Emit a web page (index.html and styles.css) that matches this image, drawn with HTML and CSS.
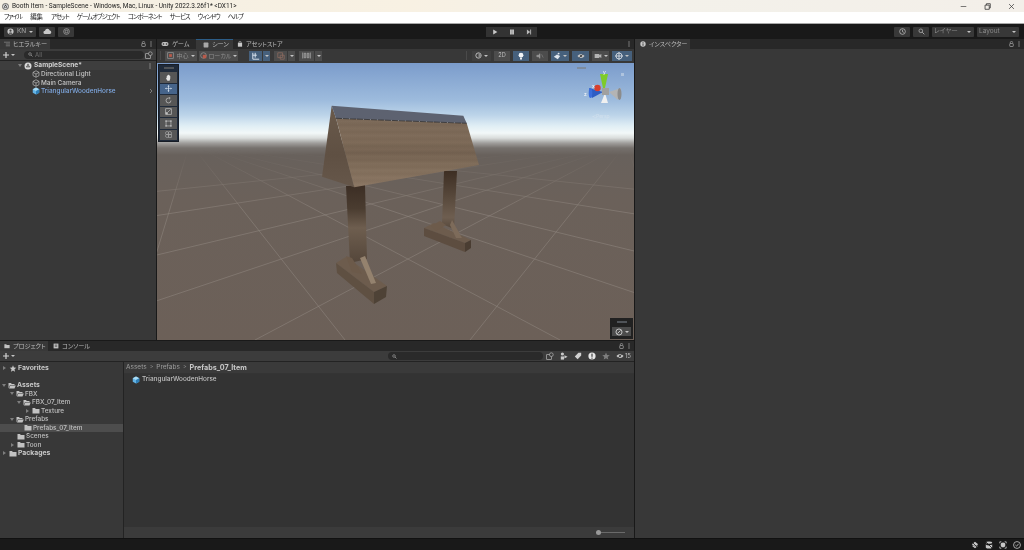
FILE: index.html
```html
<!DOCTYPE html>
<html lang="ja">
<head>
<meta charset="utf-8">
<title>Unity Editor</title>
<link rel="stylesheet" href="styles.css">
</head>
<body>
<svg class="defs" width="0" height="0" aria-hidden="true">
  <defs>
    <symbol id="i-cube" viewBox="0 0 16 16"><path d="M8 1 14.5 4.5V11.5L8 15 1.5 11.5V4.5Z" fill="#63b4e6"/><path d="M8 1 14.5 4.5 8 8 1.5 4.5Z" fill="#a9dcf5"/><path d="M8 8 14.5 4.5V11.5L8 15Z" fill="#2f7fb8"/></symbol>
    <symbol id="i-go" viewBox="0 0 16 16"><path d="M8 1.5 14 4.7V11.3L8 14.5 2 11.3V4.7ZM2 4.7 8 8 14 4.7M8 8V14.5" fill="none" stroke="#c4c4c4" stroke-width="1.3"/></symbol>
    <symbol id="i-unity" viewBox="0 0 16 16"><circle cx="8" cy="8" r="7" fill="#d8d8d8"/><path d="M8 3 12 10.5H4Z" fill="#2b2b2b"/><circle cx="8" cy="8" r="1.6" fill="#d8d8d8"/></symbol>
    <symbol id="i-fclosed" viewBox="0 0 16 14"><path d="M1 2H6L7.5 4H15V13H1Z" fill="#c2c2c2"/></symbol>
    <symbol id="i-fopen" viewBox="0 0 16 14"><path d="M1 2H6L7.5 4H13V6H4L1 13Z" fill="#c2c2c2"/><path d="M4.5 7H15.5L13 13H2Z" fill="#c2c2c2"/></symbol>
    <symbol id="i-lock" viewBox="0 0 10 12"><path d="M2.5 5V3.4a2.5 2.5 0 0 1 5 0" fill="none" stroke="#bdbdbd" stroke-width="1.2"/><rect x="1.5" y="5" width="7" height="6" rx="1" fill="none" stroke="#bdbdbd" stroke-width="1.2"/></symbol>
    <symbol id="i-dots" viewBox="0 0 4 12"><g fill="#c4c4c4"><rect x="1" y="1" width="2" height="2"/><rect x="1" y="5" width="2" height="2"/><rect x="1" y="9" width="2" height="2"/></g></symbol>
    <symbol id="i-plus" viewBox="0 0 10 10"><path d="M5 0V10M0 5H10" stroke="#d4d4d4" stroke-width="2"/></symbol>
    <symbol id="i-search" viewBox="0 0 10 10"><circle cx="4" cy="4" r="2.6" fill="none" stroke="#a8a8a8" stroke-width="1.2"/><path d="M6 6 9 9" stroke="#a8a8a8" stroke-width="1.4"/></symbol>
    <symbol id="i-eye" viewBox="0 0 16 10"><path d="M1 5C4 0 12 0 15 5 12 10 4 10 1 5Z" fill="#c4c4c4"/><circle cx="8" cy="5" r="2" fill="#3a3a3a"/><path d="M3 9.5 13 .5" stroke="#3a3a3a" stroke-width="1.2"/></symbol>
    <symbol id="i-filter" viewBox="0 0 12 12"><rect x="1" y="4" width="7" height="7" fill="none" stroke="#bdbdbd" stroke-width="1"/><circle cx="8" cy="4" r="2.8" fill="#3a3a3a" stroke="#bdbdbd" stroke-width="1"/></symbol>
  </defs>
</svg>

<div class="app">
<header class="titlebar">
  <svg class="title-logo" viewBox="0 0 16 16"><use href="#i-unity"/><circle cx="8" cy="8" r="7" fill="none" stroke="#333" stroke-width="1.5"/></svg>
  <span class="title-text">Booth Item - SampleScene - Windows, Mac, Linux - Unity 2022.3.26f1* &lt;DX11&gt;</span>
  <div class="win-controls">
    <svg viewBox="0 0 10 10"><path d="M1 5H9" stroke="#444" stroke-width="1"/></svg>
    <svg viewBox="0 0 10 10"><path d="M1.5 3H7.5V9H1.5ZM3.5 3V1H9V7H7.5" fill="none" stroke="#333" stroke-width="1.1"/></svg>
    <svg viewBox="0 0 10 10"><path d="M1.5 1.5 8.5 8.5M8.5 1.5 1.5 8.5" stroke="#333" stroke-width="1"/></svg>
  </div>
</header>

<nav class="menubar">
  <span>ファイル</span><span class="kanji">編集</span><span>アセット</span><span>ゲームオブジェクト</span><span>コンポーネント</span><span>サービス</span><span>ウィンドウ</span><span>ヘルプ</span>
</nav>

<div class="toolbar">
  <div class="tb-left">
    <div class="tb-btn tb-account"><svg class="ic7" viewBox="0 0 16 16"><circle cx="8" cy="8" r="7" fill="#c8c8c8"/><circle cx="8" cy="6" r="2.5" fill="#444"/><path d="M3.5 13c1-4 8-4 9 0" fill="#444"/></svg><span>KN</span><i class="caret"></i></div>
    <div class="tb-btn tb-icon"><svg class="ic9" viewBox="0 0 16 10"><path d="M4 9.5a3 3 0 0 1-.5-6A4.5 4.5 0 0 1 12 3a3.3 3.3 0 0 1 0 6.5Z" fill="#c8c8c8"/></svg></div>
    <div class="tb-btn tb-icon"><svg class="ic7" viewBox="0 0 16 16"><circle cx="8" cy="8" r="6.5" fill="none" stroke="#b4b4b4" stroke-width="1.5"/><circle cx="8" cy="8" r="3" fill="none" stroke="#b4b4b4" stroke-width="1.5"/></svg></div>
  </div>
  <div class="tb-center">
    <div class="play-btn"><svg viewBox="0 0 10 10"><path d="M2 1 9 5 2 9Z" fill="#c8c8c8"/></svg></div>
    <div class="play-btn"><svg viewBox="0 0 10 10"><path d="M2 1H4.5V9H2ZM5.5 1H8V9H5.5Z" fill="#e0e0e0"/></svg></div>
    <div class="play-btn"><svg viewBox="0 0 10 10"><path d="M1.5 1 7 5 1.5 9ZM7 1H8.5V9H7Z" fill="#b8b8b8"/></svg></div>
  </div>
  <div class="tb-right">
    <div class="tb-btn tb-icon"><svg class="ic7" viewBox="0 0 16 16"><circle cx="8" cy="8" r="6.5" fill="none" stroke="#c8c8c8" stroke-width="1.6"/><path d="M8 4V8.5L11 10" fill="none" stroke="#c8c8c8" stroke-width="1.6"/></svg></div>
    <div class="tb-btn tb-icon"><svg class="ic7" viewBox="0 0 10 10"><use href="#i-search"/></svg></div>
    <div class="tb-btn tb-drop"><span>レイヤー</span><i class="caret"></i></div>
    <div class="tb-btn tb-drop"><span>Layout</span><i class="caret"></i></div>
  </div>
</div>

<main class="workspace">
  <section class="left-col">
    <div class="top-row">
      <section class="hierarchy">
        <div class="tabrow">
          <div class="tab tab-active tab-hier"><svg class="ic6" viewBox="0 0 10 8"><path d="M0 1H10M3 4H10M3 7H10" stroke="#9a9a9a" stroke-width="1"/></svg><span>ヒエラルキー</span></div>
          <div class="tab-actions"><svg class="lock" viewBox="0 0 10 12"><use href="#i-lock"/></svg><svg class="dots" viewBox="0 0 4 12"><use href="#i-dots"/></svg></div>
        </div>
        <div class="hier-tools">
          <svg class="plus" viewBox="0 0 10 10"><use href="#i-plus"/></svg><i class="caret"></i>
          <div class="search hier-search"><svg class="ic5" viewBox="0 0 10 10"><use href="#i-search"/></svg><span>All</span></div>
          <svg class="ic8" viewBox="0 0 12 12"><use href="#i-filter"/></svg>
        </div>
        <div class="scene-row">
          <i class="arrow-down"></i><svg class="ic8" viewBox="0 0 16 16"><use href="#i-unity"/></svg><b>SampleScene*</b>
          <svg class="dots push" viewBox="0 0 4 12"><use href="#i-dots"/></svg>
        </div>
        <div class="hier-row"><svg class="ic8" viewBox="0 0 16 16"><use href="#i-go"/></svg><span>Directional Light</span></div>
        <div class="hier-row"><svg class="ic8" viewBox="0 0 16 16"><use href="#i-go"/></svg><span>Main Camera</span></div>
        <div class="hier-row hier-prefab"><svg class="ic8" viewBox="0 0 16 16"><use href="#i-cube"/></svg><span>TriangularWoodenHorse</span><svg class="chev" viewBox="0 0 6 8"><path d="M1.5 1 4.5 4 1.5 7" fill="none" stroke="#a0a0a0" stroke-width="1"/></svg></div>
      </section>

      <section class="sceneview">
        <div class="tabrow">
          <div class="tab tab-game"><svg class="ic8" viewBox="0 0 16 10"><rect x="1" y="1" width="14" height="8" rx="4" fill="#c0c0c0"/><circle cx="5" cy="5" r="1.6" fill="#333"/><circle cx="11" cy="5" r="1.6" fill="#333"/></svg><span>ゲーム</span></div>
          <div class="tab tab-active tab-scene"><svg class="ic6" viewBox="0 0 10 10"><rect x="1" y="1" width="8" height="8" rx="1" fill="#a8a8a8"/></svg><span>シーン</span></div>
          <div class="tab tab-store"><svg class="ic6" viewBox="0 0 10 10"><path d="M1.5 3H8.5V9.500H1.5Z" fill="#c8c8c8"/><path d="M3.300 4V2a1.700 1.700 0 0 1 3.400 0V4" fill="none" stroke="#c8c8c8"/></svg><span>アセットストア</span></div>
          <div class="tab-actions"><svg class="dots" viewBox="0 0 4 12"><use href="#i-dots"/></svg></div>
        </div>
        <div class="scene-tools">
          <div class="st-group">
            <i class="grip"></i>
            <div class="st-btn st-pivot"><svg class="ic7" viewBox="0 0 10 10"><rect x="1" y="1" width="8" height="8" fill="none" stroke="#9a9a9a"/><rect x="3" y="3" width="4" height="4" fill="#b85a4a"/></svg><span>中心</span><i class="caret"></i></div>
            <div class="st-btn st-local"><svg class="ic7" viewBox="0 0 10 10"><circle cx="5" cy="5" r="4" fill="none" stroke="#9a9a9a"/><rect x="4" y="4" width="5" height="5" fill="#b85a4a"/></svg><span>ローカル</span><i class="caret"></i></div>
          </div>
          <div class="st-group st-snap">
            <div class="st-btn st-on st-sq"><svg class="ic8" viewBox="0 0 10 10"><path d="M1 1V9H9M1 4H6M4 1V7" fill="none" stroke="#dce6f0" stroke-width="1.200"/></svg></div>
            <div class="st-btn st-on st-arrow"><i class="caret"></i></div>
            <div class="st-btn st-sq st-gap"><svg class="ic8" viewBox="0 0 10 10"><path d="M1 1H7V7H1ZM4 4H9V9H4Z" fill="none" stroke="#8c6a60" stroke-width="1"/></svg></div>
            <div class="st-btn st-arrow"><i class="caret"></i></div>
            <div class="st-btn st-wide st-gap"><svg class="ic9" viewBox="0 0 12 10"><path d="M1 1V9M11 1V9M3 2V8H5V2ZM7 2V8H9V2Z" fill="none" stroke="#b4b4b4"/></svg></div>
            <div class="st-btn st-arrow"><i class="caret"></i></div>
          </div>
          <div class="st-group st-right">
            <i class="grip"></i>
            <div class="st-btn st-shade"><svg class="ic7" viewBox="0 0 10 10"><circle cx="5" cy="5" r="3.800" fill="none" stroke="#cfcfcf" stroke-width="1.200"/><path d="M5 1.200a3.800 3.800 0 0 1 0 7.600Z" fill="#8a8a8a"/></svg><i class="caret"></i></div>
            <div class="st-btn st-2d"><span>2D</span></div>
            <div class="st-btn st-on st-tog"><svg class="ic8" viewBox="0 0 10 10"><circle cx="5" cy="4" r="3" fill="#f2f4f6"/><rect x="3.800" y="7" width="2.400" height="2.400" fill="#f2f4f6"/></svg></div>
            <div class="st-btn st-tog"><svg class="ic8" viewBox="0 0 10 10"><path d="M1 4H3L5 2V8L3 6H1ZM7 3 9 7" fill="#9a9a9a" stroke="#9a9a9a" stroke-width=".6"/></svg></div>
            <div class="st-btn st-on st-fx"><svg class="ic8" viewBox="0 0 10 10"><path d="M1 6 5 3 9 5 6 9Z" fill="#dfe6ee"/><circle cx="7" cy="2" r="1.200" fill="#dfe6ee"/></svg><i class="caret"></i></div>
            <div class="st-btn st-on st-hide"><svg class="ic8" viewBox="0 0 16 10"><use href="#i-eye"/></svg></div>
            <div class="st-btn st-cam"><svg class="ic8" viewBox="0 0 12 10"><path d="M1 2H8V8H1ZM8 4 11 2V8L8 6Z" fill="#b4b4b4"/></svg><i class="caret"></i></div>
            <div class="st-btn st-on st-giz"><svg class="ic8" viewBox="0 0 10 10"><circle cx="5" cy="5" r="3.800" fill="none" stroke="#e4e8ee"/><path d="M5 0V10M0 5H10" stroke="#e4e8ee"/></svg><i class="caret"></i></div>
          </div>
        </div>

        <div class="viewport">
          <svg class="scene-canvas" viewBox="157 63 477 277" preserveAspectRatio="none">
            <defs>
              <linearGradient id="env" x1="0" y1="0" x2="0" y2="1">
                <stop offset="0" stop-color="#7b9ccb"/><stop offset=".134" stop-color="#9dbbdd"/><stop offset=".188" stop-color="#bcd4e9"/><stop offset=".227" stop-color="#e0eef5"/><stop offset=".253" stop-color="#f2f8f8"/><stop offset=".271" stop-color="#d9dcdb"/><stop offset=".289" stop-color="#a09e9c"/><stop offset=".307" stop-color="#76716d"/><stop offset=".332" stop-color="#68615c"/><stop offset=".495" stop-color="#6b615a"/><stop offset="1" stop-color="#6c6058"/>
              </linearGradient>
              <linearGradient id="lineFade" gradientUnits="userSpaceOnUse" x1="0" y1="150" x2="0" y2="210">
                <stop offset="0" stop-color="#000"/><stop offset="1" stop-color="#fff"/>
              </linearGradient>
              <mask id="lineMask" maskUnits="userSpaceOnUse" x="157" y="63" width="477" height="277">
                <rect x="157" y="63" width="477" height="277" fill="url(#lineFade)"/>
              </mask>
              <linearGradient id="plank" x1="0" y1="0" x2="0" y2="1">
                <stop offset="0" stop-color="#7a6857"/><stop offset=".3" stop-color="#7d6a58"/><stop offset=".5" stop-color="#746251"/><stop offset=".7" stop-color="#806d5a"/><stop offset="1" stop-color="#8a7663"/>
              </linearGradient>
              <linearGradient id="stripes" gradientUnits="userSpaceOnUse" x1="0" y1="118" x2="0" y2="125" spreadMethod="repeat">
                <stop offset="0" stop-color="#4a3a2c" stop-opacity=".06"/><stop offset=".5" stop-color="#b09c86" stop-opacity=".05"/><stop offset="1" stop-color="#4a3a2c" stop-opacity=".06"/>
              </linearGradient>
              <linearGradient id="side" x1="0" y1="0" x2="0" y2="1">
                <stop offset="0" stop-color="#6a5a4b"/><stop offset=".6" stop-color="#5f5043"/><stop offset="1" stop-color="#66574a"/>
              </linearGradient>
              <linearGradient id="postL" x1="0" y1="0" x2="0" y2="1">
                <stop offset="0" stop-color="#3c2e24"/><stop offset=".3" stop-color="#4a3c30"/><stop offset=".55" stop-color="#6e5e4f"/><stop offset="1" stop-color="#54463a"/>
              </linearGradient>
              <linearGradient id="postR" x1="0" y1="0" x2="0" y2="1">
                <stop offset="0" stop-color="#3d2e23"/><stop offset=".45" stop-color="#58493c"/><stop offset=".8" stop-color="#6e5e50"/><stop offset="1" stop-color="#55473a"/>
              </linearGradient>
            </defs>
            <rect x="157" y="63" width="477" height="277" fill="url(#env)"/>
            <g class="grid-lines" mask="url(#lineMask)">
              <line x1="190" y1="143" x2="560" y2="340"/><line x1="190" y1="143" x2="345" y2="340"/><line x1="190" y1="143" x2="130" y2="340"/><line x1="190" y1="143" x2="775" y2="340"/><line x1="190" y1="143" x2="1000" y2="340"/><line x1="190" y1="143" x2="1300" y2="320"/><line x1="190" y1="143" x2="1700" y2="300"/>
              <line x1="627" y1="143" x2="255" y2="340"/><line x1="627" y1="143" x2="40" y2="340"/><line x1="627" y1="143" x2="470" y2="340"/><line x1="627" y1="143" x2="685" y2="340"/><line x1="627" y1="143" x2="-200" y2="340"/><line x1="627" y1="143" x2="-520" y2="320"/><line x1="627" y1="143" x2="-900" y2="300"/>
            </g>
            <!-- right stand -->
            <polygon points="424,228 434,223 471,240 465,243" fill="#6d5c4d"/>
            <polygon points="424,228 465,243 465,252 424,236" fill="#5d4d40"/>
            <polygon points="465,243 471,240 471,248 465,252" fill="#4a3d32"/>
            <polygon points="444,171 457,171 454,229 442,224" fill="url(#postR)"/>
            <polygon points="440,221 446,225 436,231 431,226" fill="#6d5b4b"/>
            <polygon points="450,225 452,220 462,238 456,238" fill="#7d6b5a"/>
            <!-- left stand -->
            <polygon points="336,263 346,257 387,286 374,292" fill="#6d5c4d"/>
            <polygon points="336,263 374,292 374,304 337,273" fill="#5f5042"/>
            <polygon points="374,292 387,286 386,297 374,304" fill="#4e4236"/>
            <polygon points="346,186 365,185 367,259 350,263" fill="url(#postL)"/>
            <polygon points="346,256 352,258 362,274 352,272" fill="#6c5a4a"/>
            <polygon points="360,258 365,256 376,283 371,284" fill="#94826e"/>
            <!-- roof -->
            <polygon points="331.700,105.700 336,118.300 354.300,187.300 322,176.700" fill="url(#side)"/>
            <polygon points="336,118.300 466.700,123.300 479,165 354.300,187.300" fill="url(#plank)"/>
            <polygon points="336,118.300 466.700,123.300 479,165 354.300,187.300" fill="url(#stripes)"/>
            <polygon points="331.700,105.700 463.300,115.700 466.700,123.300 336,118.300" fill="#5d6270"/>
            <polyline points="336,118.300 466.700,123.300" fill="none" stroke="#2e2c2c" stroke-width=".8" stroke-dasharray="6 1"/>
            <!-- gizmo -->
            <g class="gizmo">
              <polygon points="600,74 608,74 605,88 603,88" fill="#7ecb2a"/>
              <polygon points="589,88 603,92 592,98" fill="#2e5dc4"/>
              <ellipse cx="590.500" cy="93" rx="1.800" ry="5" fill="#3a6ddb"/>
              <circle cx="597.500" cy="88" r="3.200" fill="#d8402e"/>
              <polygon points="601,103 608,103 605,93" fill="#f0f0f0"/>
              <polygon points="609,92 621,88 618,100" fill="#b4b4b4"/>
              <ellipse cx="619.500" cy="94" rx="2" ry="6" fill="#8c8c8c"/>
              <rect x="602" y="88" width="7" height="7" fill="#a0a0a0"/>
            </g>
          </svg>
          <span class="gz gz-y">y</span><span class="gz gz-x">x</span><span class="gz gz-z">z</span>
          <span class="persp">≺Persp</span>
          <i class="view-grip"></i>
          <i class="view-lock"></i>

          <div class="tool-palette">
            <i class="pal-handle"></i>
            <div class="tool"><svg viewBox="0 0 10 10"><path d="M2.500 5V3h1V1.500h1V1h1v.5h1V3h1V6.500L6.500 9.500h-3L1.500 6.500 2.500 5Z" fill="#e4e4e4"/></svg></div>
            <div class="tool tool-on"><svg viewBox="0 0 10 10"><path d="M5 0 6.500 2H3.500ZM5 10 3.500 8H6.500ZM0 5 2 3.500V6.500ZM10 5 8 6.500V3.500ZM4.500 2H5.500V8H4.500ZM2 4.500H8V5.500H2Z" fill="#dfe9f4"/></svg></div>
            <div class="tool"><svg viewBox="0 0 10 10"><path d="M8.500 5A3.500 3.500 0 1 1 5 1.500L7 1.500M6 0 7.500 1.500 6 3" fill="none" stroke="#c8c8c8"/></svg></div>
            <div class="tool"><svg viewBox="0 0 10 10"><rect x="1" y="1" width="8" height="8" fill="none" stroke="#c0c0c0"/><rect x="1" y="6" width="3" height="3" fill="#c0c0c0"/><path d="M4 6 8 2" stroke="#c0c0c0"/></svg></div>
            <div class="tool"><svg viewBox="0 0 10 10"><rect x="1.500" y="1.500" width="7" height="7" fill="none" stroke="#bcbcbc"/><g fill="#bcbcbc"><rect x=".5" y=".5" width="2" height="2"/><rect x="7.500" y=".5" width="2" height="2"/><rect x=".5" y="7.500" width="2" height="2"/><rect x="7.500" y="7.500" width="2" height="2"/></g></svg></div>
            <div class="tool"><svg viewBox="0 0 10 10"><circle cx="3" cy="3" r="2.300" fill="none" stroke="#a8a8a8"/><circle cx="7" cy="3" r="2.300" fill="none" stroke="#a8a8a8"/><circle cx="3" cy="7" r="2.300" fill="none" stroke="#a8a8a8"/><rect x="5" y="5" width="4" height="4" fill="none" stroke="#a8a8a8"/></svg></div>
          </div>

          <div class="orient">
            <i class="pal-handle"></i>
            <div class="orient-btn"><svg viewBox="0 0 10 10"><circle cx="5" cy="5" r="3.800" fill="none" stroke="#c8c8c8" stroke-width="1.200"/><path d="M3 7 7 3" stroke="#c8c8c8" stroke-width="1.200"/></svg><i class="caret"></i></div>
          </div>
        </div>
      </section>
    </div>

    <section class="project">
      <div class="tabrow">
        <div class="tab tab-active tab-proj"><svg class="ic6" viewBox="0 0 16 14"><use href="#i-fclosed"/></svg><span>プロジェクト</span></div>
        <div class="tab tab-console"><svg class="ic6" viewBox="0 0 10 10"><rect x="1" y="1" width="8" height="8" fill="#bdbdbd"/><path d="M3 3.500H7M3 5.500H7" stroke="#333"/></svg><span>コンソール</span></div>
        <div class="tab-actions"><svg class="lock" viewBox="0 0 10 12"><use href="#i-lock"/></svg><svg class="dots" viewBox="0 0 4 12"><use href="#i-dots"/></svg></div>
      </div>
      <div class="proj-tools">
        <svg class="plus" viewBox="0 0 10 10"><use href="#i-plus"/></svg><i class="caret"></i>
        <div class="search proj-search"><svg class="ic5" viewBox="0 0 10 10"><use href="#i-search"/></svg></div>
        <div class="proj-icons">
          <svg class="ic8" viewBox="0 0 12 12"><use href="#i-filter"/></svg>
          <svg class="ic8" viewBox="0 0 10 10"><g fill="#c8c8c8"><circle cx="3" cy="2.500" r="2"/><rect x="1" y="5.500" width="4" height="4"/><path d="M5.500 4 9.500 6 5.500 8Z"/></g></svg>
          <svg class="ic8" viewBox="0 0 10 10"><path d="M1 5.500 5.500 1H9V4.500L4.500 9Z" fill="#d0d0d0"/></svg>
          <svg class="ic8" viewBox="0 0 10 10"><circle cx="5" cy="5" r="4.500" fill="#e6e6e6"/><rect x="4.300" y="2" width="1.400" height="4" fill="#333"/><rect x="4.300" y="7" width="1.400" height="1.400" fill="#333"/></svg>
          <svg class="ic8" viewBox="0 0 10 10"><path d="M5 .5 6.300 3.700 9.700 4 7.100 6.200 7.900 9.500 5 7.700 2.100 9.500 2.900 6.200.3 4 3.700 3.700Z" fill="#7e7e7e"/></svg>
          <span class="hidden-count"><svg class="ic8" viewBox="0 0 16 10"><use href="#i-eye"/></svg><span>15</span></span>
        </div>
      </div>
      <div class="proj-body">
        <aside class="tree">
          <div class="tree-row d0 tree-gap"><i class="arrow-right"></i><svg viewBox="0 0 10 10"><path d="M5 .5 6.300 3.700 9.700 4 7.100 6.200 7.900 9.500 5 7.700 2.100 9.500 2.900 6.200.3 4 3.700 3.700Z" fill="#c8c8c8"/></svg><b>Favorites</b></div>
          <div class="tree-row d0"><i class="arrow-down"></i><svg viewBox="0 0 16 14"><use href="#i-fopen"/></svg><b>Assets</b></div>
          <div class="tree-row d1"><i class="arrow-down"></i><svg viewBox="0 0 16 14"><use href="#i-fopen"/></svg><span>FBX</span></div>
          <div class="tree-row d2"><i class="arrow-down"></i><svg viewBox="0 0 16 14"><use href="#i-fopen"/></svg><span>FBX_07_Item</span></div>
          <div class="tree-row d3"><i class="arrow-right"></i><svg viewBox="0 0 16 14"><use href="#i-fclosed"/></svg><span>Texture</span></div>
          <div class="tree-row d1"><i class="arrow-down"></i><svg viewBox="0 0 16 14"><use href="#i-fopen"/></svg><span>Prefabs</span></div>
          <div class="tree-row d2 tree-sel"><i class="arrow-none"></i><svg viewBox="0 0 16 14"><use href="#i-fclosed"/></svg><span>Prefabs_07_Item</span></div>
          <div class="tree-row d1"><i class="arrow-none"></i><svg viewBox="0 0 16 14"><use href="#i-fclosed"/></svg><span>Scenes</span></div>
          <div class="tree-row d1"><i class="arrow-right"></i><svg viewBox="0 0 16 14"><use href="#i-fclosed"/></svg><span>Toon</span></div>
          <div class="tree-row d0"><i class="arrow-right"></i><svg viewBox="0 0 16 14"><use href="#i-fclosed"/></svg><b>Packages</b></div>
        </aside>
        <div class="files">
          <div class="crumbs"><span>Assets</span><em>&gt;</em><span>Prefabs</span><em>&gt;</em><b>Prefabs_07_Item</b></div>
          <div class="file-list"><div class="file-row"><svg class="ic8" viewBox="0 0 16 16"><use href="#i-cube"/></svg><span>TriangularWoodenHorse</span></div></div>
          <div class="files-foot"><div class="slider"><i class="knob"></i></div></div>
        </div>
      </div>
    </section>
  </section>

  <aside class="inspector">
    <div class="tabrow">
      <div class="tab tab-active tab-insp"><svg class="ic6" viewBox="0 0 10 10"><circle cx="5" cy="5" r="4.500" fill="#c8c8c8"/><rect x="4.300" y="2" width="1.400" height="1.400" fill="#333"/><rect x="4.300" y="4" width="1.400" height="4" fill="#333"/></svg><span>インスペクター</span></div>
      <div class="tab-actions"><svg class="lock" viewBox="0 0 10 12"><use href="#i-lock"/></svg><svg class="dots" viewBox="0 0 4 12"><use href="#i-dots"/></svg></div>
    </div>
  </aside>
</main>

<footer class="statusbar">
  <svg viewBox="0 0 10 10"><path d="M1 4 5 1 9 4 5 7Z M1 6 5 9 9 6" fill="#c8c8c8"/><path d="M1 1 9 9" stroke="#191919"/></svg>
  <svg viewBox="0 0 10 10"><ellipse cx="5" cy="2" rx="4" ry="1.500" fill="#c8c8c8"/><path d="M1 4C2 6 8 6 9 4V8C8 10 2 10 1 8Z" fill="#c8c8c8"/><path d="M1 1 9 9" stroke="#191919"/></svg>
  <svg viewBox="0 0 10 10"><circle cx="5" cy="5" r="3" fill="#c8c8c8"/><path d="M1 1H3M7 1H9V3M9 7V9H7M3 9H1V7M1 3V1" fill="none" stroke="#c8c8c8"/></svg>
  <svg viewBox="0 0 10 10"><circle cx="5" cy="5" r="4.300" fill="none" stroke="#c8c8c8"/><path d="M3 5 4.500 6.500 7 3.500" fill="none" stroke="#c8c8c8"/></svg>
</footer>
</div>
</body>
</html>
```

FILE: styles.css
```css
* { box-sizing: border-box; }
html, body { margin: 0; padding: 0; }
body { width: 1024px; height: 550px; overflow: hidden; background: #191919; }
.app {
  width: 1024px; height: 550px; overflow: hidden;
  display: flex; flex-direction: column;
  background: #191919; color: #c4c4c4;
  font-family: "Inter", "Noto Sans CJK JP", sans-serif;
  font-size: 6.5px; line-height: 1; white-space: nowrap;
  filter: blur(.3px);
}
.defs { position: absolute; }
svg { display: block; flex: none; }
i { display: block; flex: none; }

.ic5 { width: 5px; height: 5px; }
.ic6 { width: 6px; height: 6px; }
.ic7 { width: 7px; height: 7px; }
.ic8 { width: 8px; height: 8px; }
.ic9 { width: 9px; height: 9px; }

.caret { width: 0; height: 0; border: 2px solid transparent; border-top: 2.5px solid #c4c4c4; border-bottom: 0; }
.arrow-down { width: 0; height: 0; border: 2.5px solid transparent; border-top: 3px solid #7e7e7e; border-bottom: 0; }
.arrow-right { width: 0; height: 0; margin: 0 1px; border: 2.5px solid transparent; border-left: 3px solid #7e7e7e; border-right: 0; }
.arrow-none { width: 5px; height: 3px; }

/* window chrome */
.titlebar {
  height: 12px; flex: none; display: flex; align-items: center; padding-left: 2px; gap: 3px;
  background: linear-gradient(90deg, #f4efe3 0, #f8f1e3 40%, #f3f1ea 65%, #f3efe9 100%);
  color: #222; font-family: "Roboto", sans-serif; font-size: 6.500px;
}
.title-logo { width: 7px; height: 7px; }
.win-controls { margin-left: auto; display: flex; gap: 17px; padding-right: 9px; }
.win-controls svg { width: 7px; height: 7px; }
.menubar {
  height: 11px; flex: none; display: flex; align-items: center; gap: 8px; padding-left: 4px;
  background: #fff; color: #222; font-family: "Noto Sans CJK JP", sans-serif; font-size: 6.400px;
  font-feature-settings: "palt"; letter-spacing: -1px;
}
.menubar .kanji { letter-spacing: 0; }
.toolbar {
  height: 16px; flex: none; display: grid; grid-template-columns: 1fr auto 1fr; align-items: center;
  background: #191919; border-top: 1px solid #a8a8a8; padding: 0 5px 0 4px;
}
.tb-left, .tb-right { display: flex; gap: 3px; align-items: center; }
.tb-right { justify-content: flex-end; }
.tb-btn {
  height: 10px; background: #383838; border-radius: 1px; display: flex; align-items: center;
  justify-content: center; color: #a9a9a9; font-size: 6.500px;
}
.tb-account { width: 32px; gap: 3px; padding: 0 3px; justify-content: flex-start; }
.tb-icon { width: 16px; }
.tb-drop { width: 42px; justify-content: space-between; padding: 0 3px 0 2px; color: #8a8a8a; font-feature-settings: "palt"; }
.tb-center { display: flex; }
.play-btn { width: 17px; height: 10px; background: #333; display: flex; align-items: center; justify-content: center; }
.play-btn svg { width: 6px; height: 6px; }

/* workspace */
.workspace { height: 499px; flex: none; display: flex; background: #191919; }
.left-col { width: 634px; display: flex; flex-direction: column; gap: 1px; }
.top-row { height: 301px; flex: none; display: flex; gap: 1px; }
.hierarchy { width: 156px; background: #383838; display: flex; flex-direction: column; }
.sceneview { width: 477px; display: flex; flex-direction: column; background: #383838; }
.inspector { flex: 1; margin-left: 1px; background: #383838; display: flex; flex-direction: column; }
.project { flex: 1; background: #383838; display: flex; flex-direction: column; }

.tabrow { height: 10px; flex: none; display: flex; align-items: stretch; background: #282828; }
.tab { display: flex; align-items: center; gap: 3px; padding-left: 4px; font-size: 6.200px; color: #b8b8b8; font-family: "Noto Sans CJK JP", sans-serif; font-feature-settings: "palt"; letter-spacing: -.1px; }
.tab-active { background: #383838; }
.tab-hier { width: 50px; }
.tab-game { width: 39px; }
.tab-scene { width: 37px; border-top: 1px solid #2c5d87; padding-left: 7px; }
.tab-store { width: 54px; }
.tab-proj { width: 48px; }
.tab-console { width: 40px; padding-left: 5px; }
.tab-insp { width: 55px; padding-left: 5px; }
.tab-actions { margin-left: auto; display: flex; align-items: center; gap: 4px; padding-right: 4px; }
.lock { width: 5px; height: 6px; }
.dots { width: 2px; height: 6px; }

/* hierarchy */
.hier-tools { height: 12px; flex: none; display: flex; align-items: center; padding: 0 3px; background: #3c3c3c; border-bottom: 1px solid #232323; }
.plus { width: 6px; height: 6px; margin-right: 2px; }
.search { height: 8px; border-radius: 4px; background: #2a2a2a; display: flex; align-items: center; gap: 2px; padding-left: 4px; color: #6f6f6f; font-size: 6px; }
.hier-search { flex: 1; margin: 0 1px 0 9px; }
.scene-row { height: 9px; flex: none; display: flex; align-items: center; gap: 2px; padding: 0 5px 0 18px; background: #3e3e3e; font-size: 6.600px; color: #cfcfcf; }
.push { margin-left: auto; }
.hier-row { height: 8.500px; flex: none; display: flex; align-items: center; gap: 1px; padding-left: 32px; padding-right: 3px; font-size: 6.400px; font-weight: 500; color: #c6c6c6; }
.hier-prefab { color: #7fa8e0; }
.chev { width: 4px; height: 6px; margin-left: auto; }

/* scene view */
.scene-tools { height: 14px; flex: none; display: flex; align-items: center; padding: 0 2px 1px 3px; background: #383838; }
.st-group { display: flex; align-items: center; gap: 2px; }
.st-snap { margin-left: 11px; gap: 0; }
.st-right { margin-left: auto; gap: 3px; }
.grip { width: 1px; height: 9px; background: #4a4a4a; margin-right: 2px; }
.st-btn { height: 10px; background: #4c4c4c; display: flex; align-items: center; justify-content: center; gap: 2px; font-size: 6px; color: #8e8e8e; font-family: "Noto Sans CJK JP", sans-serif; font-feature-settings: "palt"; }
.st-on { background: #46607c; }
.st-pivot { width: 32px; }
.st-local { width: 39px; }
.st-sq { width: 13px; }
.st-arrow { width: 7px; margin-left: 1px; }
.st-gap { margin-left: 4px; }
.st-wide { width: 15px; }
.st-shade { width: 19px; background: #3f3f3f; }
.st-2d { width: 16px; font-family: "Inter", sans-serif; font-size: 5.600px; color: #c0c0c0; }
.st-tog { width: 16px; }
.st-fx { width: 18px; }
.st-hide { width: 17px; }
.st-cam { width: 17px; }
.st-giz { width: 20px; }

.viewport { position: relative; flex: 1; overflow: hidden; }
.scene-canvas { width: 100%; height: 100%; }
.grid-lines line { stroke: #8f867f; stroke-width: .8; stroke-opacity: .7; }
.gz { position: absolute; color: #fff; font-size: 5px; }
.gz-y { left: 446px; top: 7px; }
.gz-x { left: 435px; top: 21px; }
.gz-z { left: 427px; top: 29px; }
.persp { position: absolute; left: 435px; top: 51px; color: #dfe8ef; font-size: 5px; opacity: .55; }
.view-grip { position: absolute; left: 420px; top: 4px; width: 9px; height: 2px; background: #7d8ca0; }
.view-lock { position: absolute; left: 464px; top: 10px; width: 3px; height: 3px; background: #d8e2ec; opacity: .5; }

.tool-palette {
  position: absolute; left: 1px; top: 1px; width: 21px; padding: 0 1px 1px;
  background: #1f2a3a; border: 1px solid #171c25; display: flex; flex-direction: column; gap: 1px;
}
.pal-handle { height: 6px; display: flex; }
.pal-handle::before { content: ""; margin: 2px auto; width: 10px; height: 2px; background: #4f5358; }
.tool { height: 10.500px; background: #565656; display: flex; align-items: center; justify-content: center; }
.tool svg { width: 7px; height: 7px; }
.tool-on { background: #46648a; }
.orient { position: absolute; right: 1px; bottom: 1px; width: 23px; height: 21px; background: #212121; padding: 1px 2px; display: flex; flex-direction: column; }
.orient-btn { height: 9px; margin-top: 2px; background: #4c4c4c; display: flex; align-items: center; justify-content: center; gap: 2px; }
.orient-btn svg { width: 8px; height: 8px; }

/* project */
.proj-tools { height: 11px; flex: none; display: flex; align-items: center; padding: 0 3px; background: #3c3c3c; border-bottom: 1px solid #232323; }
.proj-search { width: 161px; margin-left: 373px; }
.proj-icons { display: flex; align-items: center; gap: 6px; margin-left: 3px; color: #bdbdbd; font-size: 6px; }
.hidden-count { display: flex; align-items: center; gap: 1px; }
.proj-body { flex: 1; display: flex; min-height: 0; }
.tree { width: 124px; padding-top: 2px; font-size: 6.400px; font-weight: 500; color: #c0c0c0; border-right: 1px solid #232323; }
.tree-row { height: 8.500px; display: flex; align-items: center; gap: 2px; }
.tree-row svg { width: 8px; height: 7px; }
.tree-row svg + * { margin-left: -1px; }
.tree-row b { color: #c8c8c8; font-size: 6.800px; font-weight: 700; }
.tree-gap { margin-bottom: 8.500px; }
.d0 { padding-left: 2px; }
.d1 { padding-left: 10px; }
.d2 { padding-left: 17px; }
.d3 { padding-left: 25px; }
.tree-sel { background: #4d4d4d; }
.files { flex: 1; display: flex; flex-direction: column; }
.crumbs { height: 12px; flex: none; display: flex; align-items: center; gap: 3px; padding-left: 2px; font-size: 6.500px; color: #9c9c9c; background: #3a3a3a; border-bottom: 1px solid #343434; }
.crumbs b { color: #c8c8c8; font-size: 7.200px; }
.crumbs em { font-style: normal; color: #8a8a8a; font-size: 5.500px; }
.file-list { flex: 1; padding: 1px 0 0 8px; background: #333; }
.file-row { height: 9px; display: flex; align-items: center; gap: 2px; font-size: 6.400px; font-weight: 500; color: #c0c0c0; }
.files-foot { height: 11px; flex: none; background: #3b3b3b; display: flex; align-items: center; justify-content: flex-end; padding-right: 9px; }
.slider { width: 29px; height: 1px; background: #6a6a6a; display: flex; align-items: center; }
.knob { width: 5px; height: 5px; border-radius: 50%; background: #999; }

/* status */
.statusbar { flex: 1; display: flex; align-items: center; justify-content: flex-end; gap: 6px; padding-right: 3px; background: #191919; border-top: 1px solid #111; }
.statusbar svg { width: 8px; height: 8px; }
```
